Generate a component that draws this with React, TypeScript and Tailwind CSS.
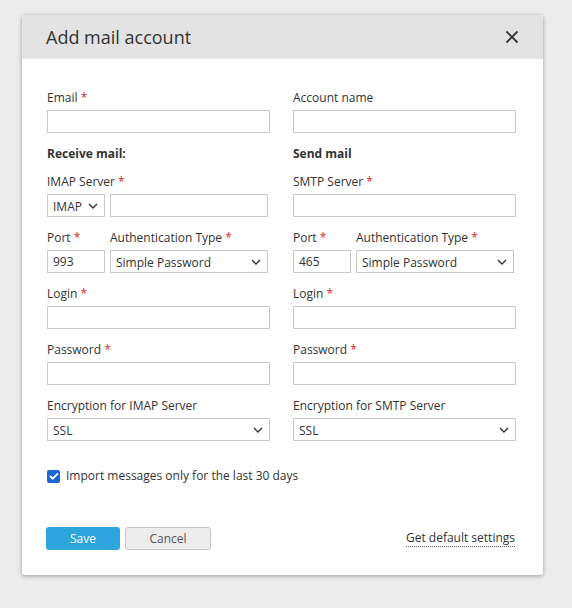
import React from 'react';

const font = { fontFamily: '"Open Sans", "Noto Sans", sans-serif' };

function Req() {
  return <span className="text-[#e0262b]"> *</span>;
}

function Label({ text, req }: { text: string; req?: boolean }) {
  return (
    <div className="mb-[4px] h-[18px] text-[12px] leading-[20px] text-[#333]">
      {text}
      {req && <Req />}
    </div>
  );
}

function Chevron() {
  return (
    <svg width="10" height="6" viewBox="0 0 10 6" className="shrink-0">
      <path d="M1 1l4 4 4-4" fill="none" stroke="#333" strokeWidth="1.4" />
    </svg>
  );
}

function Input({ value, w }: { value?: string; w?: string }) {
  return (
    <div
      className={`flex h-[23px] items-center border border-[#c9c9c9] bg-white px-[5px] pt-px text-[12px] text-[#333] ${w ?? 'w-full'}`}
    >
      {value}
    </div>
  );
}

function Select({ value, w }: { value: string; w?: string }) {
  return (
    <div
      className={`flex h-[23px] items-center justify-between border border-[#c9c9c9] bg-white pl-[5px] pr-[6px] text-[12px] text-[#333] ${w ?? 'w-full'}`}
    >
      <span className="pt-[2px]">{value}</span>
      <Chevron />
    </div>
  );
}

function Column({ side }: { side: 'in' | 'out' }) {
  const incoming = side === 'in';
  return (
    <div className="flex w-[223px] flex-col">
      <Label text={incoming ? 'Email' : 'Account name'} req={incoming} />
      <Input />
      <div className="mb-[10px] mt-[11px] h-[18px] text-[12px] font-bold leading-[20px] text-[#333]">
        {incoming ? 'Receive mail:' : 'Send mail'}
      </div>
      <Label text={incoming ? 'IMAP Server' : 'SMTP Server'} req />
      {incoming ? (
        <div className="flex w-[221px] gap-[5px]">
          <Select value="IMAP" w="w-[58px]" />
          <Input w="w-[158px]" />
        </div>
      ) : (
        <Input />
      )}
      <div className="mt-[11px] flex w-[221px] gap-[5px]">
        <div className="flex w-[58px] flex-col">
          <Label text="Port" req />
          <Input value={incoming ? '993' : '465'} />
        </div>
        <div className="flex w-[158px] flex-col">
          <Label text="Authentication Type" req />
          <Select value="Simple Password" />
        </div>
      </div>
      <div className="mt-[11px]">
        <Label text="Login" req />
        <Input />
      </div>
      <div className="mt-[11px]">
        <Label text="Password" req />
        <Input />
      </div>
      <div className="mt-[11px]">
        <Label text={incoming ? 'Encryption for IMAP Server' : 'Encryption for SMTP Server'} />
        <Select value="SSL" />
      </div>
    </div>
  );
}

export default function App() {
  return (
    <div className="min-h-[608px] w-[572px] bg-[#ececec] pl-[22px] pt-[15px]" style={font}>
      <div className="w-[521px] overflow-hidden rounded-[3px] bg-white shadow-[0_1px_4px_rgba(0,0,0,0.35)]">
        <div className="flex h-[44px] items-center justify-between bg-[#e3e3e3] pl-[24px] pr-[24px]">
          <span className="text-[18px] text-[#333]">Add mail account</span>
          <svg width="14" height="14" viewBox="0 0 14 14">
            <path d="M1.5 1.5l11 11M12.5 1.5l-11 11" stroke="#333" strokeWidth="1.8" />
          </svg>
        </div>
        <div className="px-[25px] pb-[25px] pt-[29px]">
          <div className="flex gap-[23px]">
            <Column side="in" />
            <Column side="out" />
          </div>
          <div className="mt-[26px] flex h-[18px] items-center gap-[6px] text-[12px] text-[#333]">
            <div className="flex h-[13px] w-[13px] items-center justify-center rounded-[2px] bg-[#1a66d6]">
              <svg width="10" height="8" viewBox="0 0 10 8">
                <path d="M1 4l2.7 2.7L9 1.3" fill="none" stroke="white" strokeWidth="1.8" />
              </svg>
            </div>
            <span>Import messages only for the last 30 days</span>
          </div>
          <div className="mt-[42px] flex items-center justify-between">
            <div className="-ml-px flex gap-[5px]">
              <button className="h-[23px] w-[74px] rounded-[3px] bg-[#2ea4dd] text-[12px] text-white">
                Save
              </button>
              <button className="h-[23px] w-[86px] rounded-[3px] border border-[#c6c6c6] bg-[#ececec] text-[12px] text-[#555]">
                Cancel
              </button>
            </div>
            <span className="mr-[3px] border-b border-dotted border-[#555] text-[12px] leading-[16px] text-[#333]">
              Get default settings
            </span>
          </div>
        </div>
      </div>
    </div>
  );
}
